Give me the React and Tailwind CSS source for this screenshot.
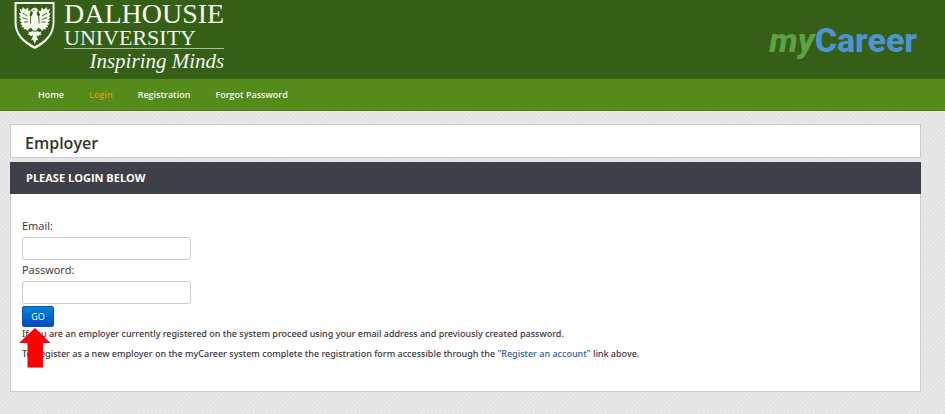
import React from "react";

function Crest() {
  return (
    <svg viewBox="0 0 42 50" className="h-[50px] w-[42px] shrink-0" fill="none" aria-hidden="true">
      <path d="M0.500 2h40v20.500c0 12-8 20.500-19.700 26.500C8.500 43 .5 34.500 .5 22.500Z" fill="#f4f8ef" />
      <path d="M2.600 4h36v18.500c0 11-7.300 18.300-17.900 23.700C9.800 40.800 2.600 33.500 2.600 22.500Z" fill="#355e16" />
      <g fill="#f4f8ef">
        <path d="M5.500 8.500 8 10l1-3 2.500 2.500L14 7.500l.5 3.500 2.500-.5-1.500 4.500 2 3.500v9l-2.500 1.500-2 2-1-2-2.500.5.500-2-2.700-.5 1.200-1.700-2.500-1.300 2-1.500-2.700-2 2-1-2.500-2.500 2-.5-2-3 2-.5Z" />
        <path d="M36 8.500 33.500 10l-1-3L30 9.500l-2.500-2-.5 3.500-2.500-.5 1.500 4.500-2 3.500v9l2.500 1.500 2 2 1-2 2.500.5-.5-2 2.700-.5-1.200-1.700 2.500-1.300-2-1.500 2.700-2-2-1 2.500-2.500-2-.5 2-3-2-.5Z" />
        <path d="M16.500 10.500 18 8.800c1.500-1.800 5-1.500 5.700.7.400 1.700-.4 3-1.200 4.200l2.500 4.300v9l-2.700 3.500 2.700 1.500 2.500-.5-1 2 1.500 1.500-2.500-.3-.8 1.800-2-1.500.3 2.500 1.500 2.700-2-.5-1.700 4.300-1.800-4.300-2 .5 1.500-2.700.3-2.500-2 1.500-.8-1.800-2.500.3 1.500-1.500-1-2 2.500.5 2.700-1.500-2.700-3.500v-9l2.300-4.500-.3-2Z" />
      </g>
      <path
        stroke="#355e16"
        strokeWidth="0.9"
        d="m8.500 13 5 3m-5 1.500 5 2m-3.500 2.500h4M33 13l-5 3m5 1.500-5 2m3.500 2.500h-4M16.500 17v6.500m8.500-6.500v6.500M18.500 31h4.600M19 10.500h1.500"
      />
    </svg>
  );
}

function DalhousieLogo() {
  return (
    <div className="flex gap-2 text-[#f4f8ef] font-['Liberation_Serif',serif]">
      <Crest />
      <div className="flex flex-col">
        <span className="text-[28px] leading-7">DALHOUSIE</span>
        <span className="text-[22px] leading-5">UNIVERSITY</span>
        <span className="border-t border-[#a9bf98] text-right text-[21px] italic leading-6">Inspiring Minds</span>
      </div>
    </div>
  );
}

const links = ["Home", "Login", "Registration", "Forgot Password"];

function Field({ id, label, type }) {
  return (
    <div className="flex flex-col items-start">
      <label htmlFor={id} className="mb-px text-[11px] leading-5 text-[#333]">
        {label}
      </label>
      <input
        id={id}
        type={type}
        className="h-[23px] w-[169px] rounded-[3px] border border-[#ccc] bg-white px-2 text-[11px] outline-none"
      />
    </div>
  );
}

export default function App() {
  return (
    <div className="min-h-screen bg-[#e4e4e4] bg-[repeating-linear-gradient(135deg,#e9e9e9_0px,#e9e9e9_1px,#dfdfdf_2px,#e9e9e9_3px)] font-['Open_Sans',sans-serif]">
      <header className="flex h-[79px] items-start justify-between bg-[#355e16] pl-[14px] pr-7">
        <DalhousieLogo />
        <div className="pt-[18px] text-[34px] font-extrabold leading-[44px] font-['Roboto',sans-serif]">
          <span className="italic text-[#5fa244]">my</span>
          <span className="text-[#4f93d2]">Career</span>
        </div>
      </header>

      <nav className="flex h-8 items-center gap-[25px] border-b border-[#4a7d17] bg-[#558b1a] pl-[38px] text-[9px] font-semibold text-[#f2f6ec]">
        {links.map((link) => (
          <a key={link} href="#" className={link === "Login" ? "text-[#d8a008]" : ""}>
            {link}
          </a>
        ))}
      </nav>

      <main className="mr-6 ml-[10px] flex flex-col gap-1 pt-[13px] pb-[22px]">
        <h1 className="flex h-[34px] items-center border border-[#ccc] bg-white px-[14px] pt-[3px] text-[16px] font-semibold text-[#333]">
          Employer
        </h1>

        <section className="border border-[#ccc] bg-white">
          <h2 className="-mx-px -mt-px flex h-8 items-center bg-[#3d4049] px-4 text-[11px] font-bold text-white">
            PLEASE LOGIN BELOW
          </h2>
          <form className="flex flex-col items-start px-[11px] pt-[22px] pb-[31px]" onSubmit={(e) => e.preventDefault()}>
            <Field id="email" label="Email:" type="email" />
            <Field id="password" label="Password:" type="password" />
            <div className="relative mt-[2px] mb-px">
              <button
                type="submit"
                className="block h-[21px] w-8 rounded-[2px] border border-[#0a55b8] bg-linear-to-b from-[#0785cf] to-[#0648c4] text-[9px] leading-[18px] text-white"
              >
                GO
              </button>
              <svg viewBox="0 0 32 40" className="absolute top-[22px] -left-[3px] h-10 w-8" aria-hidden="true">
                <path d="M16 0 31.500 15H24v24.500H8.500V15H0Z" fill="#fe0000" />
              </svg>
            </div>
            <p className="text-[9px] font-medium leading-3 text-[#3c3340] font-['Noto_Sans',sans-serif]">
              If you are an employer currently registered on the system proceed using your email address and previously
              created password.
            </p>
            <p className="mt-2 text-[9px] font-medium leading-3 text-[#3c3340] font-['Noto_Sans',sans-serif]">
              To Register as a new employer on the myCareer system complete the registration form accessible through the{" "}
              <a href="#" className="text-[#2f5f95]">
                "Register an account"
              </a>{" "}
              link above.
            </p>
          </form>
        </section>
      </main>
    </div>
  );
}
